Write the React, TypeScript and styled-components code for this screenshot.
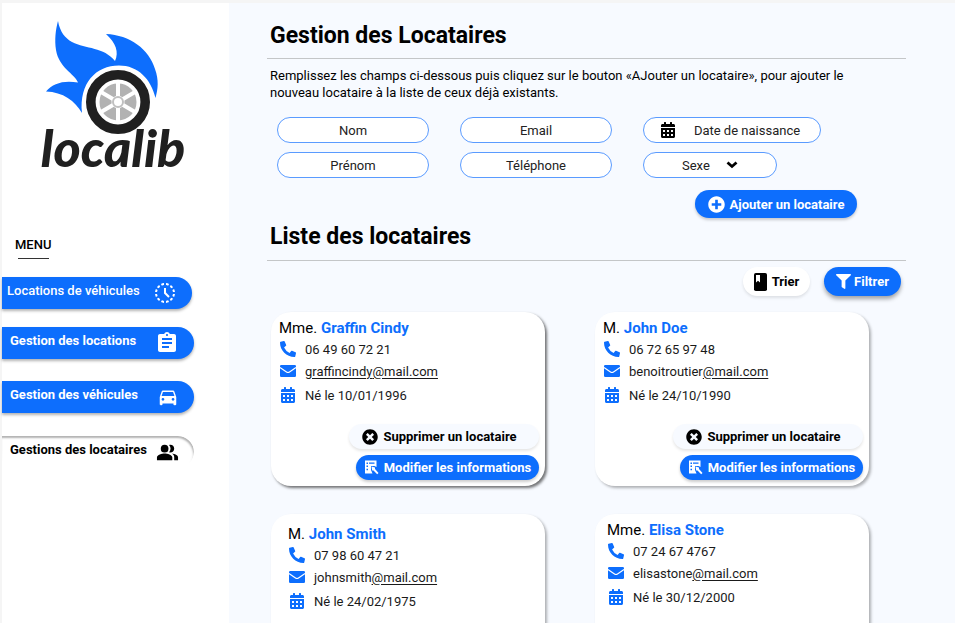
import React from 'react';
import styled, { createGlobalStyle } from 'styled-components';
import { MdHistoryToggleOff, MdAssignment, MdDirectionsCar, MdPeopleAlt } from 'react-icons/md';
import { FaFilter, FaPlusCircle, FaCalendarAlt, FaPhoneAlt, FaTimesCircle } from 'react-icons/fa';

const blue = '#0d6efd';

const GlobalStyle = createGlobalStyle`
  * { box-sizing: border-box; }
  html { scrollbar-width: none; }
  body {
    margin: 0;
    background: #f5f5f5;
    color: #000;
    font-family: Roboto, sans-serif;
    font-size: 14px;
  }
  button, input, select { font: inherit; color: inherit; }
`;

const Page = styled.div`
  display: grid;
  grid-template-columns: 227px minmax(0, 1fr);
  min-height: 100vh;
  padding: 3px 0 0 2px;
`;

const Sidebar = styled.aside`
  background: #fff;
  padding-top: 17px;
`;

const LogoLink = styled.a`
  display: block;
  width: 152px;
  margin-left: 34px;
  svg { display: block; }
`;

const MenuTitle = styled.h2`
  margin: 48px 0 0 13px;
  font-size: 13px;
  line-height: 18px;
  font-weight: 500;
`;

const MenuRule = styled.hr`
  width: 31px;
  height: 1px;
  margin: 4px 0 18px 16px;
  border: 0;
  background: #333;
`;

const Nav = styled.nav`
  display: flex;
  flex-direction: column;
  align-items: flex-start;
`;

const NavItem = styled.a<{ $light?: boolean; $narrow?: boolean; $gap: number }>`
  display: flex;
  justify-content: space-between;
  align-items: center;
  width: ${p => (p.$narrow ? 190 : 192)}px;
  height: 32px;
  margin-bottom: ${p => p.$gap}px;
  padding: 0 15px 0 ${p => (p.$narrow ? 5 : 8)}px;
  border-radius: 0 16px 16px 0;
  background: ${blue};
  box-shadow: 0 2px 3px rgba(0, 0, 0, .3);
  color: #fff;
  font-size: 13px;
  line-height: 18px;
  font-weight: ${p => (p.$light ? 500 : 700)};
  text-decoration: none;
  white-space: nowrap;
  span { padding-bottom: 4px; }
`;

const ActiveNavItem = styled(NavItem)`
  position: relative;
  background: #fff;
  color: #000;
  box-shadow: none;
  &::before {
    content: '';
    position: absolute;
    inset: 0;
    border-radius: inherit;
    box-shadow: inset -1px 2px 2px rgba(0, 0, 0, .3);
    mask-image: linear-gradient(#000 40%, transparent 85%);
  }
`;

const Main = styled.main`
  background: #f7faff;
  padding: 18px 49px 24px 38px;
`;

const Heading = styled.h1`
  margin: 0;
  padding: 0 3px 7px;
  border-bottom: 1px solid #c4c6c8;
  font-size: 23px;
  line-height: 30px;
  font-weight: 700;
`;

const ListHeading = styled(Heading).attrs({ as: 'h2' })`
  margin-top: 4px;
  padding-bottom: 8px;
`;

const Intro = styled.p`
  max-width: 600px;
  margin: 8px 0 16px 3px;
  font-size: 13px;
  line-height: 17px;
`;

const Form = styled.form`
  display: grid;
  grid-template-columns: 152px 152px minmax(0, 214px);
  gap: 9px 31px;
  padding-left: 10px;
`;

const Field = styled.input`
  width: 100%;
  height: 26px;
  border: 1px solid #5a9bff;
  border-radius: 13px;
  background: #fff;
  text-align: center;
  font-size: 13px;
  outline: none;
  &::placeholder { color: #222; opacity: 1; }
`;

const FieldShell = styled.label<{ $width: number }>`
  display: flex;
  align-items: center;
  width: ${p => p.$width}px;
  height: 26px;
  padding: 0 16px;
  border: 1px solid #5a9bff;
  border-radius: 13px;
  background: #fff;
`;

const BareInput = styled.input`
  flex: 1;
  min-width: 0;
  padding: 0 0 0 14px;
  border: 0;
  outline: 0;
  background: none;
  font-size: 13px;
  text-align: center;
  &::placeholder { color: #222; opacity: 1; }
`;

const BareSelect = styled.select`
  appearance: none;
  width: 44px;
  margin-left: 22px;
  padding: 0;
  border: 0;
  outline: 0;
  background: none;
  color: #222;
  font-size: 13px;
`;

const SubmitRow = styled.div`
  grid-column: 3;
  display: flex;
  justify-content: flex-end;
  padding-top: 3px;
`;

const Pill = styled.button<{ $tone: 'blue' | 'white' | 'pale'; $size?: 'small' }>`
  display: inline-flex;
  align-items: center;
  justify-content: center;
  gap: 5px;
  height: ${p => (p.$size ? 25 : 28)}px;
  padding: 0 ${p => (p.$size ? 7 : 10)}px;
  border: 0;
  border-radius: 15px;
  background: ${p => ({ blue, white: '#fff', pale: '#f7faff' })[p.$tone]};
  box-shadow: 0 2px 3px rgba(0, 0, 0, ${p => (p.$tone === 'blue' ? 0.2 : 0.1)});
  color: ${p => (p.$tone === 'blue' ? '#fff' : '#000')};
  font-size: 13px;
  font-weight: 700;
  white-space: nowrap;
  cursor: pointer;
`;

const AddButton = styled(Pill)`width: 162px;`;
const DeleteButton = styled(Pill)`width: 190px; padding-right: 16px;`;
const EditButton = styled(Pill)`width: 183px;`;

const Tools = styled.div`
  display: flex;
  justify-content: flex-end;
  gap: 14px;
  padding: 6px 5px 0 0;
  margin-bottom: 16px;
`;

const SortButton = styled(Pill)`width: 67px; height: 29px;`;
const FilterButton = styled(Pill)`
  width: 77px;
  height: 29px;
  gap: 3px;
  box-shadow: 0 3px 4px rgba(0, 0, 0, .35);
`;

const Cards = styled.section`
  display: grid;
  grid-template-columns: repeat(2, minmax(0, 1fr));
  gap: 28px 50px;
  padding: 0 37px 0 4px;
`;

const Card = styled.article<{ $inset: number; $top: number; $strong?: boolean }>`
  display: flex;
  flex-direction: column;
  min-height: 174px;
  padding: ${p => p.$top}px 6px 6px ${p => p.$inset}px;
  border-radius: 20px;
  background: #fff;
  box-shadow: 2px 2px 3px rgba(0, 0, 0, ${p => (p.$strong ? 0.55 : 0.3)});
`;

const Name = styled.h3`
  margin: 0;
  font-size: 15px;
  line-height: 20px;
  font-weight: 400;
  strong { color: ${blue}; }
`;

const Details = styled.ul`
  list-style: none;
  margin: 0;
  padding: 0;
`;

const Detail = styled.li`
  display: grid;
  grid-template-columns: 17px 1fr;
  align-items: center;
  gap: 9px;
  height: 22px;
  font-size: 13px;
  color: #1a1a1a;
  svg { color: ${blue}; justify-self: center; }
  &:last-child { margin-top: 2px; }
  a { color: inherit; text-decoration: none; }
  u { text-underline-offset: 2px; }
`;

const Actions = styled.div`
  display: flex;
  flex-direction: column;
  align-items: flex-end;
  gap: 6px;
  margin-top: auto;
`;

function Logo() {
  return (
    <svg width="152" height="168" viewBox="36 20 152 168" role="img" aria-label="localib">
      <path fill={blue} d="M58 21C60 32 65 38 72 42C86 49 104 47 115 61C119 52 116 43 106 34C130 35 149 49 155 69C159 80 158 89 155.500 98C151 79 138 65.500 119 65.500C96 65.500 79 83 82 113C75 101 63 92 46 91.500C53 83 64 80 78 82.500C74 73 59 68 56 50C54.500 40 55.500 30 58 21Z" />
      <circle cx="118" cy="102" r="27.200" fill="#fff" stroke="#202020" strokeWidth="9.600" />
      <circle cx="118" cy="102" r="12.500" fill="none" stroke="#b2b2b2" strokeWidth="12" />
      <path stroke="#fff" strokeWidth="4" d="M118 82V122M101 92L135 112M101 112L135 92" />
      <circle cx="118" cy="102" r="5" fill="#fff" stroke="#c0c0c0" strokeWidth="2" />
      <text x="113" y="167" textAnchor="middle" fontFamily="Lato, sans-serif" fontSize="52" fontWeight="900" fontStyle="italic" fill="#202020">localib</text>
    </svg>
  );
}

function EditIcon() {
  return (
    <svg width="15" height="15" viewBox="0 0 15 15" aria-hidden="true">
      <path fill="currentColor" d="M1 0.500h11.500v6.500l-2-1h-3.500v4l1.500 3.500h-7.500z" />
      <path fill={blue} d="M2.500 2.500h1.500v1.500h-1.500zM5 2.500h5.500v1.200h-5.500zM2.500 5.500h1.500v1.500h-1.500zM2.500 8.700h1.500v1.500h-1.500z" />
      <path fill="currentColor" d="M7.500 6.500l3.500 1v1.500l3.500 4-1.300 1.300-3.700-3.800h-1.300z" />
    </svg>
  );
}

function MailIcon() {
  return (
    <svg width="16" height="12" viewBox="0 0 16 12" aria-hidden="true">
      <rect width="16" height="12" rx="1.200" fill="currentColor" />
      <path d="M0 2.500L6.500 7q1.500 1 3 0L16 2.500" fill="none" stroke="#fff" strokeWidth="1.100" />
    </svg>
  );
}

function BookIcon() {
  return (
    <svg width="13" height="18" viewBox="0 0 13 18" aria-hidden="true">
      <rect width="13" height="18" rx="1.800" fill="currentColor" />
      <path fill="#fff" d="M2 2h4v7.500l-2-1.800-2 1.800z" />
    </svg>
  );
}

function ChevronIcon() {
  return (
    <svg width="12" height="8" viewBox="0 0 12 8" aria-hidden="true">
      <path d="M1.500 1.500L6 5.500l4.500-4" fill="none" stroke="currentColor" strokeWidth="2.800" />
    </svg>
  );
}

type Tenant = { title: string; name: string; phone: string; user: string; born: string; inset: number; top: number; fullLink?: boolean };

const tenants: Tenant[] = [
  { title: 'Mme.', name: 'Graffin Cindy', phone: '06 49 60 72 21', user: 'graffincindy', born: '10/01/1996', inset: 8, top: 6, fullLink: true },
  { title: 'M.', name: 'John Doe', phone: '06 72 65 97 48', user: 'benoitroutier', born: '24/10/1990', inset: 8, top: 6 },
  { title: 'M.', name: 'John Smith', phone: '07 98 60 47 21', user: 'johnsmith', born: '24/02/1975', inset: 17, top: 10 },
  { title: 'Mme.', name: 'Elisa Stone', phone: '07 24 67 4767', user: 'elisastone', born: '30/12/2000', inset: 12, top: 6 },
];

function TenantCard({ t }: { t: Tenant }) {
  return (
    <Card $inset={t.inset} $top={t.top} $strong={t.fullLink}>
      <Name>{t.title} <strong>{t.name}</strong></Name>
      <Details>
        <Detail><FaPhoneAlt size={16} /><span>{t.phone}</span></Detail>
        <Detail>
          <MailIcon />
          <a href={`mailto:${t.user}@mail.com`}>{t.fullLink ? <u>{t.user}@mail.com</u> : <>{t.user}<u>@mail.com</u></>}</a>
        </Detail>
        <Detail><FaCalendarAlt size={16} /><span>Né le {t.born}</span></Detail>
      </Details>
      <Actions>
        <DeleteButton type="button" $tone="pale" $size="small"><FaTimesCircle size={16} />Supprimer un locataire</DeleteButton>
        <EditButton type="button" $tone="blue" $size="small"><EditIcon />Modifier les informations</EditButton>
      </Actions>
    </Card>
  );
}

export default function App() {
  return (
    <>
      <GlobalStyle />
      <Page>
        <Sidebar>
          <LogoLink href="#"><Logo /></LogoLink>
          <MenuTitle>MENU</MenuTitle>
          <MenuRule />
          <Nav>
            <NavItem href="#" $light $narrow $gap={18}><span>Locations de véhicules</span><MdHistoryToggleOff size={24} /></NavItem>
            <NavItem href="#" $gap={22}><span>Gestion des locations</span><MdAssignment size={24} /></NavItem>
            <NavItem href="#" $gap={23}><span>Gestion des véhicules</span><MdDirectionsCar size={22} /></NavItem>
            <ActiveNavItem href="#" $gap={0} aria-current="page"><span>Gestions des locataires</span><MdPeopleAlt size={23} /></ActiveNavItem>
          </Nav>
        </Sidebar>
        <Main>
          <Heading>Gestion des Locataires</Heading>
          <Intro>Remplissez les champs ci-dessous puis cliquez sur le bouton «AJouter un locataire», pour ajouter le nouveau locataire à la liste de ceux déjà existants.</Intro>
          <Form onSubmit={e => e.preventDefault()}>
            <Field aria-label="Nom" placeholder="Nom" />
            <Field aria-label="Email" type="email" placeholder="Email" />
            <FieldShell $width={178}><FaCalendarAlt size={16} /><BareInput aria-label="Date de naissance" placeholder="Date de naissance" /></FieldShell>
            <Field aria-label="Prénom" placeholder="Prénom" />
            <Field aria-label="Téléphone" type="tel" placeholder="Téléphone" />
            <FieldShell $width={134}><BareSelect aria-label="Sexe"><option>Sexe</option></BareSelect><ChevronIcon /></FieldShell>
            <SubmitRow><AddButton $tone="blue"><FaPlusCircle size={17} />Ajouter un locataire</AddButton></SubmitRow>
          </Form>
          <ListHeading>Liste des locataires</ListHeading>
          <Tools>
            <SortButton type="button" $tone="white"><BookIcon />Trier</SortButton>
            <FilterButton type="button" $tone="blue"><FaFilter size={15} />Filtrer</FilterButton>
          </Tools>
          <Cards>{tenants.map(t => <TenantCard key={t.name} t={t} />)}</Cards>
        </Main>
      </Page>
    </>
  );
}
